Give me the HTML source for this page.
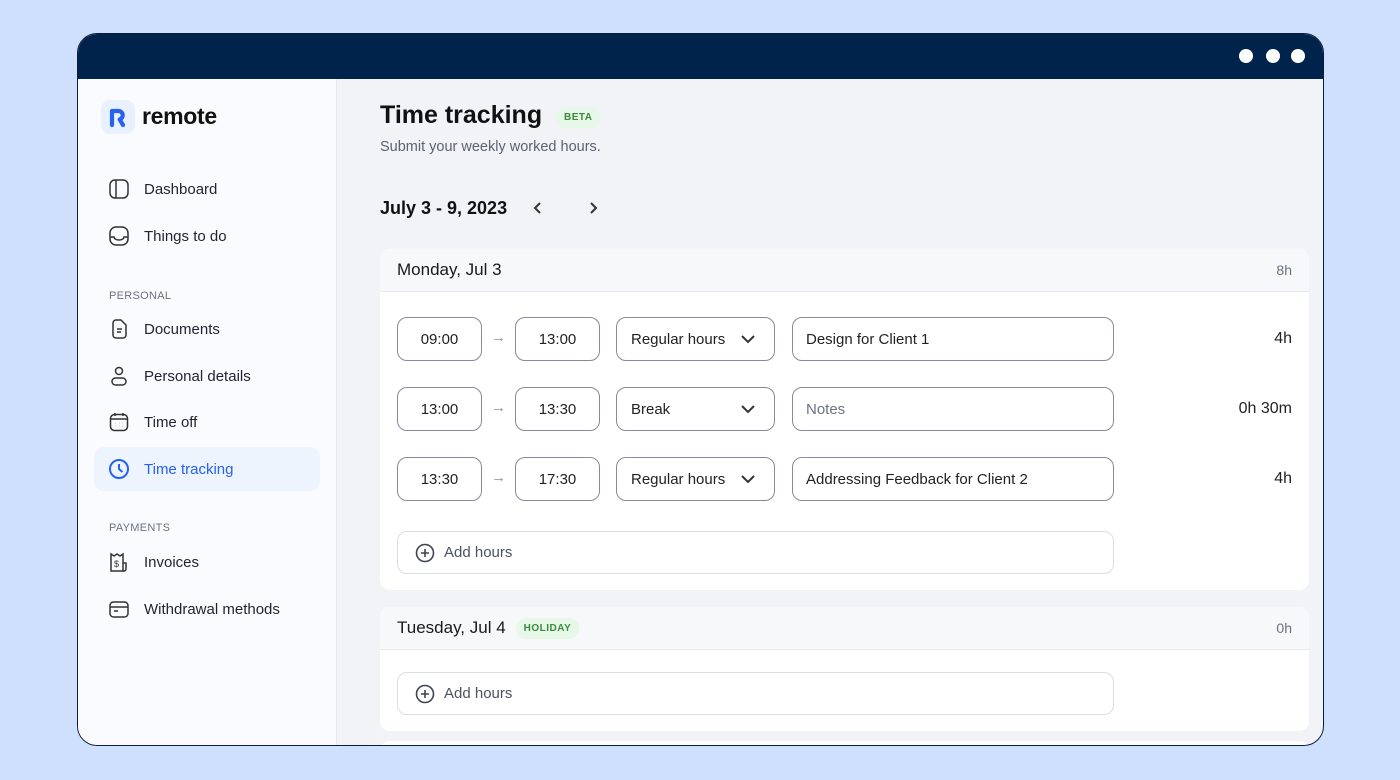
<!DOCTYPE html>
<html><head><meta charset="utf-8"><style>
*{box-sizing:border-box;margin:0;padding:0}
body{width:1400px;height:780px;background:#cfe0fd;font-family:"Liberation Sans",sans-serif;position:relative;overflow:hidden;color:#1a1a1a}
.win{position:absolute;left:77px;top:33px;width:1247px;height:713px;border:1px solid #0b1d3a;border-radius:20px;overflow:hidden;background:#f2f3f7}
.top{position:absolute;left:0;top:0;right:0;height:45px;background:#00234b}
.dot{position:absolute;top:15px;width:14px;height:14px;border-radius:50%;background:#fff}
.side{position:absolute;left:0;top:45px;width:259px;bottom:0;background:#fafbfe;border-right:1px solid #e6e8ee}
.logo{position:absolute;left:23px;top:21px;width:34px;height:34px;border-radius:9px;background:#eaf1fe}
.brand{position:absolute;left:64px;top:24px;font-size:23px;font-weight:bold;color:#111;letter-spacing:-0.3px}
.nav{position:absolute;left:16px;width:226px;height:44px;border-radius:10px;display:flex;align-items:center;padding-left:14px;font-size:15px;color:#1f2330}
.nav svg{margin-right:14px}
.nav.act{background:#eef4fe;color:#2761f0}
.sec{position:absolute;left:31px;font-size:11px;color:#6b7280;letter-spacing:.3px}
.h1{position:absolute;left:302px;top:67px;font-size:25px;font-weight:bold;color:#111}
.badge{position:absolute;font-size:10px;font-weight:bold;color:#3a8a3f;background:#e7f7e8;border-radius:10px;padding:5px 8px;letter-spacing:.5px}
.sub{position:absolute;left:302px;top:105px;font-size:14.5px;color:#5b6270}
.wk{position:absolute;left:302px;top:164px;font-size:18px;font-weight:bold;color:#111}
.card{position:absolute;left:302px;width:929px;background:#fff;border-radius:10px;overflow:hidden}
.ch{height:43px;background:#f7f8fa;border-bottom:1px solid #e7e9ee;display:flex;align-items:center;padding:0 17px;font-size:17px;color:#1a1a1a;position:relative}
.ch .t{position:absolute;right:17px;font-size:14px;color:#6b7280}
.in{position:absolute;height:44px;border:1px solid #858b97;border-radius:10px;font-size:15px;display:flex;align-items:center;color:#222}
.tm{width:85px;justify-content:center}
.arr{position:absolute;color:#8a909c;font-size:15px}
.sel{width:159px;padding-left:14px}
.sel svg{position:absolute;right:18px;top:15px}
.nt{width:322px;padding-left:13px}
.hr{position:absolute;right:17px;font-size:16px;color:#222}
.add{position:absolute;left:17px;width:717px;height:43px;border:1px solid #dadde3;border-radius:10px;display:flex;align-items:center;padding-left:17px;font-size:15px;color:#4b5260}
.add svg{margin-right:9px}
</style></head><body>
<div class="win">
<div class="top"><div class="dot" style="left:1161px"></div><div class="dot" style="left:1188px"></div><div class="dot" style="left:1213px"></div></div>
<div class="side">
<div class="logo"><svg width="34" height="34" viewBox="0 0 34 34"><path d="M11 25V11h6.5a4.3 4.3 0 0 1 1.2 8.4L22 25" fill="none" stroke="#2761f0" stroke-width="4.2" stroke-linecap="round" stroke-linejoin="round"/></svg></div>
<div class="brand">remote</div>
<div class="nav" style="top:88px"><svg width="22" height="22" viewBox="0 0 22 22" fill="none" stroke="#333" stroke-width="1.5"><rect x="2" y="2" width="18" height="18" rx="5"/><path d="M8 2v18"/></svg>Dashboard</div>
<div class="nav" style="top:135px"><svg width="22" height="22" viewBox="0 0 22 22" fill="none" stroke="#333" stroke-width="1.5"><rect x="2" y="2" width="18" height="18" rx="6"/><path d="M2 12h4a5 3 0 0 0 10 0h4"/></svg>Things to do</div>
<div class="sec" style="top:211px">PERSONAL</div>
<div class="nav" style="top:228px"><svg width="22" height="22" viewBox="0 0 22 22" fill="none" stroke="#333" stroke-width="1.5"><path d="M5 5a3 3 0 0 1 3-3h5l5 5v10a3 3 0 0 1-3 3H8a3 3 0 0 1-3-3z"/><path d="M9 11h5M9 14h4"/></svg>Documents</div>
<div class="nav" style="top:275px"><svg width="22" height="22" viewBox="0 0 22 22" fill="none" stroke="#333" stroke-width="1.5"><circle cx="11" cy="6" r="3.5"/><rect x="4" y="13" width="14" height="7" rx="3.5"/></svg>Personal details</div>
<div class="nav" style="top:321px"><svg width="22" height="22" viewBox="0 0 22 22" fill="none" stroke="#333" stroke-width="1.5"><rect x="2.5" y="3.5" width="17" height="16" rx="4"/><path d="M7 2v3M15 2v3M2.5 8h17"/><path d="M7.5 12h.1M11 12h.1M14.5 12h.1M7.5 15h.1M11 15h.1M14.5 15h.1" stroke-width="2"/></svg>Time off</div>
<div class="nav act" style="top:368px"><svg width="22" height="22" viewBox="0 0 22 22" fill="none" stroke="#2761f0" stroke-width="2"><circle cx="11" cy="11" r="9"/><path d="M11 6v5l3.5 3"/></svg>Time tracking</div>
<div class="sec" style="top:443px">PAYMENTS</div>
<div class="nav" style="top:461px"><svg width="22" height="22" viewBox="0 0 22 22" fill="none" stroke="#333" stroke-width="1.5"><path d="M3 3l3 2 3-2 3 2 3-2v17H3z"/><path d="M15 12h3v6a2 2 0 0 1-2 2h-1"/><text x="6" y="16" font-size="9" fill="#333" stroke="none" font-family="Liberation Sans">$</text></svg>Invoices</div>
<div class="nav" style="top:508px"><svg width="22" height="22" viewBox="0 0 22 22" fill="none" stroke="#333" stroke-width="1.5"><rect x="2" y="4" width="18" height="15" rx="3.5"/><path d="M2 9h18M6 13h4"/></svg>Withdrawal methods</div>
</div>
<div class="h1">Time tracking</div>
<div class="badge" style="left:478px;top:73px">BETA</div>
<div class="sub">Submit your weekly worked hours.</div>
<div class="wk">July 3 - 9, 2023</div>
<svg style="position:absolute;left:454px;top:166px" width="12" height="16" viewBox="0 0 12 16" fill="none" stroke="#333" stroke-width="2"><path d="M8 3L3 8l5 5"/></svg>
<svg style="position:absolute;left:509px;top:166px" width="12" height="16" viewBox="0 0 12 16" fill="none" stroke="#333" stroke-width="2"><path d="M4 3l5 5-5 5"/></svg>

<div class="card" style="top:215px;height:341px">
<div class="ch">Monday, Jul 3<span class="t">8h</span></div>
<div class="in tm" style="left:17px;top:68px">09:00</div><span class="arr" style="left:111px;top:80px">→</span><div class="in tm" style="left:135px;top:68px">13:00</div>
<div class="in sel" style="left:236px;top:68px">Regular hours<svg width="16" height="12" viewBox="0 0 16 12" fill="none" stroke="#333" stroke-width="2"><path d="M2 3l6 6 6-6"/></svg></div>
<div class="in nt" style="left:412px;top:68px">Design for Client 1</div><span class="hr" style="top:81px">4h</span>
<div class="in tm" style="left:17px;top:138px">13:00</div><span class="arr" style="left:111px;top:150px">→</span><div class="in tm" style="left:135px;top:138px">13:30</div>
<div class="in sel" style="left:236px;top:138px">Break<svg width="16" height="12" viewBox="0 0 16 12" fill="none" stroke="#333" stroke-width="2"><path d="M2 3l6 6 6-6"/></svg></div>
<div class="in nt" style="left:412px;top:138px;color:#6b7280">Notes</div><span class="hr" style="top:151px">0h 30m</span>
<div class="in tm" style="left:17px;top:208px">13:30</div><span class="arr" style="left:111px;top:220px">→</span><div class="in tm" style="left:135px;top:208px">17:30</div>
<div class="in sel" style="left:236px;top:208px">Regular hours<svg width="16" height="12" viewBox="0 0 16 12" fill="none" stroke="#333" stroke-width="2"><path d="M2 3l6 6 6-6"/></svg></div>
<div class="in nt" style="left:412px;top:208px">Addressing Feedback for Client 2</div><span class="hr" style="top:221px">4h</span>
<div class="add" style="top:282px"><svg width="20" height="20" viewBox="0 0 20 20" fill="none" stroke="#3d4452" stroke-width="1.6"><circle cx="10" cy="10" r="8.5"/><path d="M10 6v8M6 10h8"/></svg>Add hours</div>
</div>

<div class="card" style="top:573px;height:124px">
<div class="ch">Tuesday, Jul 4<span class="badge" style="position:relative;margin-left:10px;top:0">HOLIDAY</span><span class="t">0h</span></div>
<div class="add" style="top:65px"><svg width="20" height="20" viewBox="0 0 20 20" fill="none" stroke="#3d4452" stroke-width="1.6"><circle cx="10" cy="10" r="8.5"/><path d="M10 6v8M6 10h8"/></svg>Add hours</div>
</div>
<div class="card" style="top:707px;height:40px"></div>
</div>
</body></html>
